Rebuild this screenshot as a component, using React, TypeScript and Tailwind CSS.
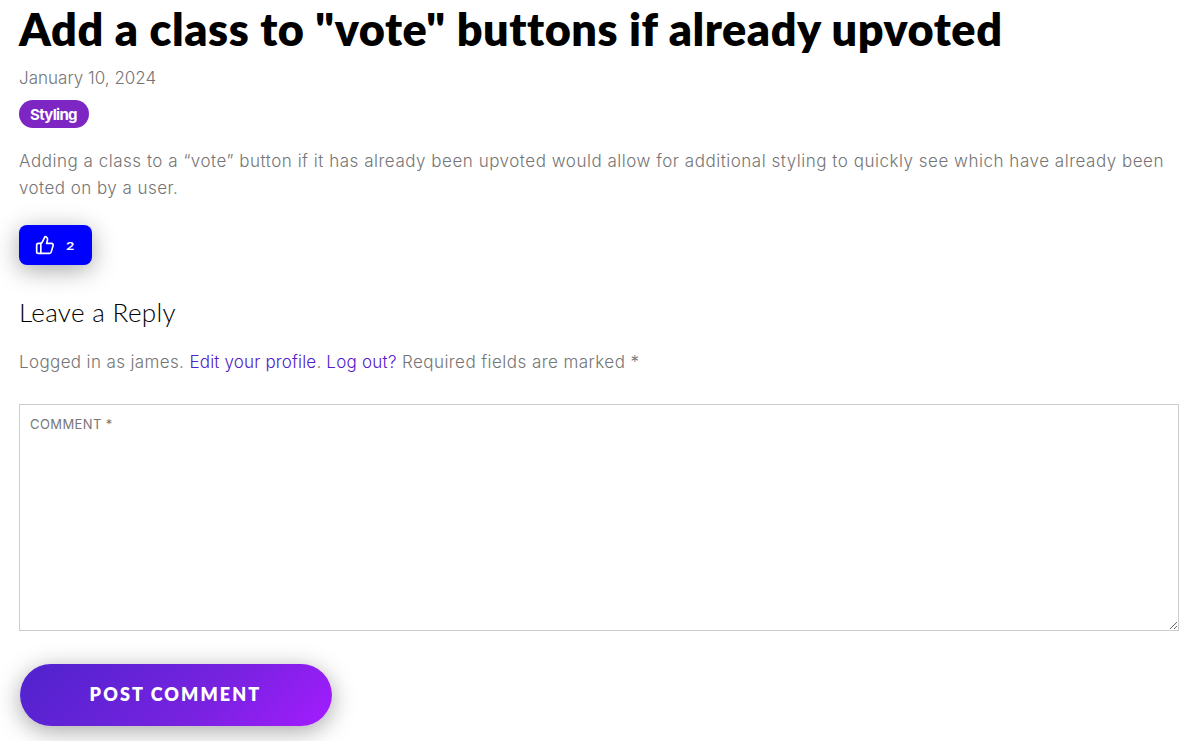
import React from "react";
import { ThumbsUp } from "lucide-react";

export default function App() {
  return (
    <main className="h-[741px] overflow-hidden bg-white pl-[19px] pr-[18px] font-['Inter',sans-serif] text-[17px] leading-[27px] font-light text-[#757575]">
      <h1 className="h-[60px] whitespace-nowrap pt-[2px] font-['Lato',sans-serif] text-[45px] leading-[54px] font-extrabold tracking-[0.54px] text-black">
        Add a class to "vote" buttons if already upvoted
      </h1>
      <div className="h-10 pt-[5px]"><span className="tracking-[0.01px]">January 10, 2024</span></div>
      <div className="flex h-7 w-[70px] items-center justify-center rounded-full bg-[#7d26c4] pr-px text-[15px] font-bold tracking-[-0.7px] text-white">
        <span>Styling</span>
      </div>
      <p className="mt-5 h-[54px] whitespace-nowrap">
        <span className="tracking-[0.52px]">Adding a class to a “vote” button if it has already been upvoted would allow for additional styling to quickly see which have already been</span>
        <br />
        <span className="tracking-[0.46px]">voted on by a user.</span>
      </p>
      <button className="mt-[23px] flex h-10 w-[73px] items-center rounded-lg bg-[#0000ff] pl-4 text-white shadow-[0_5px_24px_rgba(0,0,0,0.35)]">
        <ThumbsUp size={20} strokeWidth={2} />
        <span className="ml-[11px] inline-block origin-left scale-x-[1.3] font-['Lato',sans-serif] text-[11px] font-bold">2</span>
      </button>
      <h2 className="mt-[31px] h-[34px] whitespace-nowrap font-['Lato',sans-serif] text-[26px] leading-[32px] font-light tracking-[0.35px] text-black">
        <span>Leave a Reply</span>
      </h2>
      <p className="mt-[19px] h-[27px] whitespace-nowrap">
        <span className="tracking-[0.37px]">Logged in as james. </span>
        <a href="#" className="tracking-[0.17px] text-[#5020c8]">Edit your profile</a>
        <span className="tracking-[0.17px]">. </span>
        <a href="#" className="tracking-[0.25px] text-[#5020c8]">Log out?</a>
        <span className="tracking-[0.45px]"> Required fields are marked *</span>
      </p>
      <textarea placeholder="COMMENT *" className="mt-[28px] block h-[227px] w-full resize border border-[#ccc] px-[10px] py-[6px] text-[13px] font-normal tracking-[0.4px] placeholder:text-[#777]" />
      <button className="mt-[33px] ml-px h-[62px] w-[312px] rounded-full bg-[linear-gradient(135deg,#4f23cd_0%,#7822e0_60%,#a41cff_100%)] pr-[1px] pb-[1px] font-['Lato',sans-serif] text-[18px] font-extrabold tracking-[2.1px] text-white shadow-[0_5px_24px_rgba(0,0,0,0.35)]">
        POST COMMENT
      </button>
    </main>
  );
}
